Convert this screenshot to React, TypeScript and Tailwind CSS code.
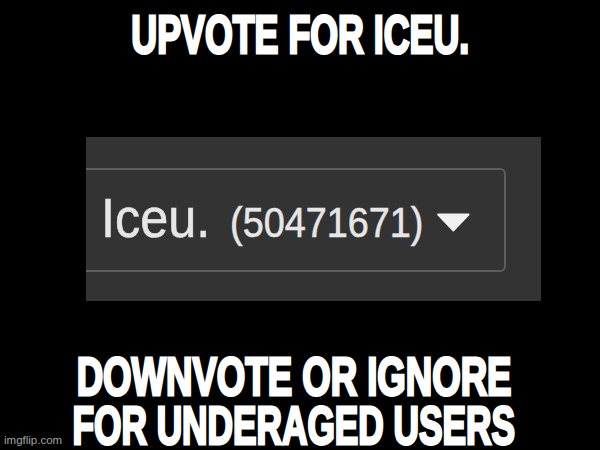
import React from "react";

const memeFont = {
  fontFamily: '"Liberation Sans", Arial, sans-serif',
};

export default function App() {
  return (
    <div
      className="relative w-[600px] h-[450px] bg-black overflow-hidden flex flex-col items-center"
      style={memeFont}
    >
      {/* Top caption */}
      <div className="mt-[7px] h-[56px] leading-[56px] text-[53px] font-bold text-white whitespace-nowrap scale-x-[0.675] [-webkit-text-stroke:3px_white]">
        UPVOTE FOR ICEU.
      </div>

      {/* Screenshot panel */}
      <div className="self-start ml-[86px] mt-[74px] w-[455px] h-[164px] bg-[#333333] overflow-hidden flex pt-[31px]">
        <div className="shrink-0 -ml-[24px] w-[444px] h-[104px] border-2 border-[#5e5e5e] rounded-[6px] pl-[37px] pt-[20px]">
          <div className="flex items-baseline origin-left scale-x-[0.9] text-[#e6e6e6] whitespace-nowrap [-webkit-text-stroke:0.6px_#e6e6e6]">
            <span className="text-[56px] leading-[56px]">Iceu.</span>
            <span className="ml-[22px] text-[42px] leading-[42px]">(50471671)</span>
            <svg
              className="self-center mt-[9px] ml-[15px] w-[37px] h-[19px] shrink-0"
              viewBox="0 0 37 19"
            >
              <polygon
                points="1.5,1.5 35.5,1.5 18.5,17.5"
                fill="#f2f2f2"
                stroke="#f2f2f2"
                strokeWidth="2"
                strokeLinejoin="round"
              />
            </svg>
          </div>
        </div>
      </div>

      {/* Bottom caption */}
      <div className="mt-[51px] mr-[12px] flex flex-col items-center text-[53px] leading-[49px] font-bold text-white whitespace-nowrap [-webkit-text-stroke:3px_white]">
        <div className="scale-x-[0.69]">DOWNVOTE OR IGNORE</div>
        <div className="scale-x-[0.665]">FOR UNDERAGED USERS</div>
      </div>

      {/* Watermark */}
      <div className="absolute left-[4px] top-[433px] text-[11.5px] leading-[14px] text-[#a3a3a3]">
        imgflip.com
      </div>
    </div>
  );
}
